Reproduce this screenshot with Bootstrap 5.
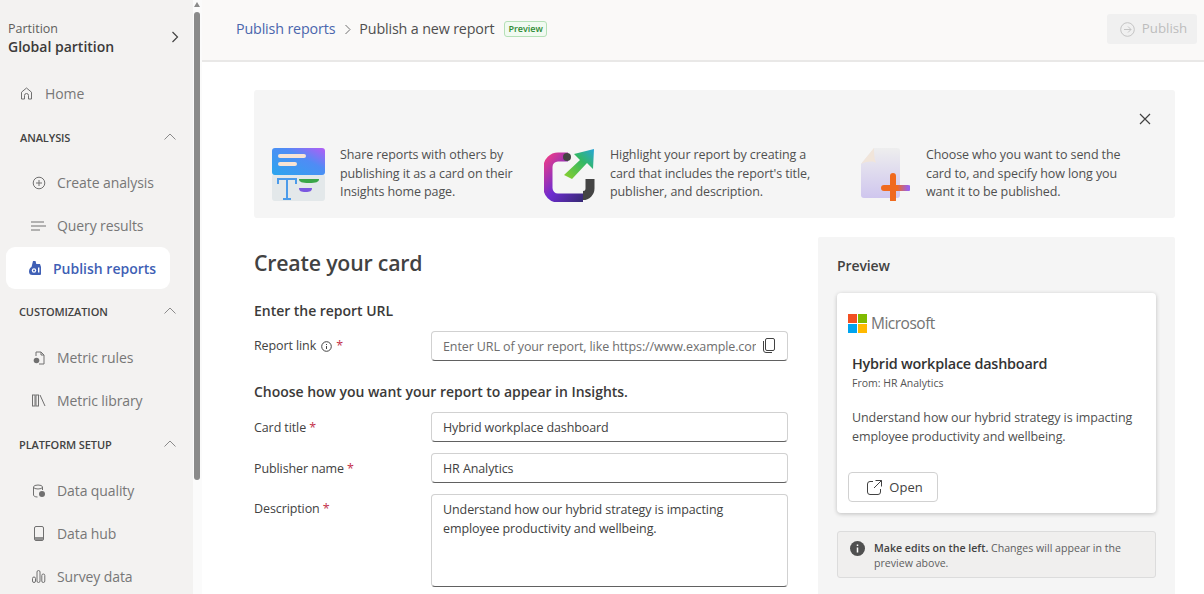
<!DOCTYPE html>
<html lang="en"><head><meta charset="utf-8"><title>Publish a new report</title>
<link href="https://cdn.jsdelivr.net/npm/bootstrap@5.3.0/dist/css/bootstrap.min.css" rel="stylesheet">
<style>
html,body{height:594px;overflow:hidden}
body{font-family:"Open Sans","Noto Sans",sans-serif;color:#424242;background:#fff;font-size:13px}
.shell{height:594px}
.sidenav{width:193px;background:#f3f2f1;flex:none;overflow:hidden}
.partition{height:71px;padding:20px 14px 0 8px}
.part-chev{margin-top:11px}
.part-lbl{font-size:12.5px;line-height:17px;color:#605e5c}
.part-name{font-size:14px;line-height:20px;font-weight:600;color:#3b3a39}
.nav-line{height:43px;color:#777;font-size:14px;letter-spacing:-.1px}
.nav-home{padding-left:20px;height:44px;gap:12px}
.nav-sub{padding-left:31px}
.nav-home svg{flex:none}
.icon-cell{width:15px;margin-right:11px;flex:none;display:flex;justify-content:center}
.sect{height:46px;padding:0 17px 0 19px;font-size:11px;font-weight:600;color:#424242;letter-spacing:-.1px}
.sect-a{padding-left:20px}
.sect-cust{height:47px}
.sect-last{height:47px}
.nav-on{height:42px;margin:0 23px 0 6px;padding-left:23px;gap:11px;background:#fff;border-radius:9px;color:#3f5fb5;font-weight:600;font-size:14px}
.track{width:9px;flex:none;background:#fbfbfb}
.thumb{width:6px;height:468px;margin:5px 0 0 1px;background:#8a8a8a;border-radius:3px}
.arrowup{width:0;height:0;margin:2px 0 0 1px;border:3.5px solid transparent;border-top:0;border-bottom:5px solid #8a8a8a}
.topbar{height:62px;flex:none;background:#faf9f8;border-bottom:2px solid #e9e8e7;padding:0 7px 2px 34px}
.crumb-a{color:#4a66ad;font-size:14.3px;letter-spacing:-.15px}
.crumb-b{color:#4f4f4f;font-size:14.3px;letter-spacing:-.15px}
.crumb-sep{margin:0 7px 0 9px}
.tag-prev{border:1px solid #b5e0b7;background:#f1faf1;color:#2f8a35;font-size:9px;line-height:12px;border-radius:3px;padding:1px 3px;font-weight:600;margin-left:10px}
.pub-btn{width:90px;height:30px;background:#f0f0f0;border:0;border-radius:3px;color:#bdbdbd;font-size:13.3px;gap:7px;padding-left:9px}
.work{padding:28px 29px 0 52px}
.banner{height:128px;background:#f5f5f5;border-radius:3px;padding:0 0 0 18px}
.banner-x{top:23px;right:24px}
.ban-txt{font-size:12.5px;line-height:18.5px;color:#505050;letter-spacing:-.1px}
.ban-cell{margin-top:56px;gap:15px}
.ban-1{width:272px}
.ban-2{width:316px;gap:13px}
.ban-2 .ban-txt{max-width:205px}
.ban-3{width:280px;gap:16px}
.ban-art{flex:none;margin-top:2px}
.formcol{width:534px;flex:none;padding-top:30px}
.h-card{font-size:21.3px;line-height:30px;font-weight:600;color:#424242;letter-spacing:-.2px;margin:0 0 23px}
.h-sec{font-size:14px;line-height:20px;font-weight:600;color:#3b3a39;letter-spacing:-.03px;margin:0}
.h-url{margin-bottom:10px}
.h-choose{margin-bottom:10px}
.frow{display:flex}
.row-link{margin-bottom:21px}
.row-gap{margin-bottom:11px}
.flbl{width:177px;flex:none;font-size:12.5px;color:#424242;letter-spacing:-.1px;padding-top:2px}
.flbl-link{padding-top:6px}
.flbl-top{padding-top:6px}
.info-i{margin-left:1px}
.req{color:#c4314b}
.fbox.form-control{height:30px;font-size:12.5px;padding:0 11px;border:1px solid #d1d1d1;border-bottom:1px solid #616161;border-radius:4px;color:#424242;letter-spacing:-.1px;box-shadow:none;background:#fff}
.fbox.form-control::placeholder{color:#6e6e6e;opacity:1}
.fbox-url.form-control{padding-right:31px}
.copy-i{top:7px;right:13px}
textarea.fbox.form-control{height:93px;line-height:19px;padding:5px 11px;resize:none}
.prevcol{width:357px;flex:none;background:#f5f5f5;margin:19px 0 0 30px;padding:19px 19px 0;height:400px;border-radius:2px}
.prev-h{font-size:14px;line-height:20px;font-weight:600;color:#424242;letter-spacing:-.1px;margin-bottom:17px}
.pcard{height:220px;background:#fff;border-radius:4px;box-shadow:0 1px 4px rgba(0,0,0,.22);padding:19px 11px 0}
.ms-logo{flex:none}
.ms-word{font-size:15.5px;color:#737373;letter-spacing:-.5px;font-weight:500}
.pc-title{font-size:14.4px;line-height:20px;font-weight:600;color:#333;letter-spacing:-.2px;margin:19px 0 0 4px}
.pc-from{font-size:10.5px;line-height:18px;color:#555;margin-left:4px}
.pc-desc{font-size:12.5px;line-height:19px;color:#505050;margin:16px 0 0 4px;letter-spacing:-.1px}
.open-btn{width:90px;height:30px;margin-top:26px;border:1px solid #d1d1d1;border-radius:4px;background:#fff;color:#424242;font-size:13px;gap:7px;padding:0 0 0 4px}
.hintbox{height:47px;margin-top:18px;background:#f0efee;border:1px solid #dcdcdc;border-radius:3px;padding:9px 12px 0;gap:9px;font-size:10.6px;line-height:15px;color:#5e5e5e}
.hintbox b{font-weight:600;color:#424242}
.hint-i{flex:none;margin-top:0}
</style></head><body>
<div class="shell d-flex">
 <nav class="sidenav">
  <div class="partition d-flex justify-content-between align-items-start">
   <div><div class="part-lbl">Partition</div><div class="part-name">Global partition</div></div>
   <svg class="part-chev" width="8" height="12" viewBox="0 0 8 12" fill="none" stroke="#424242" stroke-width="1.2"><path d="M1.500 1l5 5-5 5"/></svg>
  </div>
  <div class="nav-line nav-home d-flex align-items-center"><svg width="13" height="13" viewBox="0 0 13 13" fill="none" stroke="#707070"><path d="M1.500 12V5.200L6.500 1l5 4.200V12H8.500V8.500a2 2 0 0 0-4 0V12z"/></svg>Home</div>
  <div class="sect sect-a d-flex align-items-center justify-content-between"><span>ANALYSIS</span><svg class="mb-1" width="12" height="7" viewBox="0 0 12 7" fill="none" stroke="#8a8a8a"><path d="M.5 6.500 6 1l5.500 5.500"/></svg></div>
  <div class="nav-line nav-sub d-flex align-items-center"><span class="icon-cell"><svg width="14" height="14" viewBox="0 0 14 14" fill="none" stroke="#707070"><circle cx="7" cy="7" r="5.800"/><path d="M7 4v6M4 7h6"/></svg></span>Create analysis</div>
  <div class="nav-line nav-sub d-flex align-items-center"><span class="icon-cell"><svg width="15" height="12" viewBox="0 0 15 12" fill="none" stroke="#707070"><path d="M0 2h13M0 6h15M0 10h9"/></svg></span>Query results</div>
  <div class="nav-on d-flex align-items-center"><svg width="13" height="14" viewBox="0 0 13 14" fill="#3f5fb5"><path d="M4 0h2.500l.8 3H11l1 3v7a1 1 0 0 1-1 1H3.500A3.500 3.500 0 0 1 0 10.500C0 8 1.500 6.500 2.500 6z"/><circle cx="5" cy="9.500" r="2.200" fill="#fff"/><circle cx="5" cy="9.500" r="1" fill="#3f5fb5"/><rect x="9" y="6.500" width="1.400" height="5" fill="#fff"/></svg>Publish reports</div>
  <div class="sect sect-cust d-flex align-items-center justify-content-between"><span>CUSTOMIZATION</span><svg class="mb-1" width="12" height="7" viewBox="0 0 12 7" fill="none" stroke="#8a8a8a"><path d="M.5 6.500 6 1l5.500 5.500"/></svg></div>
  <div class="nav-line nav-sub d-flex align-items-center"><span class="icon-cell"><svg width="14" height="14" viewBox="0 0 14 14" fill="none" stroke="#707070"><path d="M4 5V1h5l3 3v9H7"/><path d="M9 1v3h3"/><circle cx="4.500" cy="9.500" r="2.800" fill="#707070" stroke="none"/></svg></span>Metric rules</div>
  <div class="nav-line nav-sub d-flex align-items-center"><span class="icon-cell"><svg width="14" height="13" viewBox="0 0 14 13" fill="none" stroke="#707070"><rect x=".5" y="1" width="2.500" height="11"/><rect x="4" y="1" width="2.500" height="11"/><path d="M8 1l5 11"/></svg></span>Metric library</div>
  <div class="sect sect-last d-flex align-items-center justify-content-between"><span>PLATFORM SETUP</span><svg class="mb-1" width="12" height="7" viewBox="0 0 12 7" fill="none" stroke="#8a8a8a"><path d="M.5 6.500 6 1l5.500 5.500"/></svg></div>
  <div class="nav-line nav-sub d-flex align-items-center"><span class="icon-cell"><svg width="14" height="14" viewBox="0 0 14 14" fill="none" stroke="#707070"><ellipse cx="6" cy="3" rx="4.500" ry="2"/><path d="M1.500 3v8c0 1 1.500 2 4 2M10.500 3v3"/><circle cx="10" cy="10" r="3" fill="#707070" stroke="none"/></svg></span>Data quality</div>
  <div class="nav-line nav-sub d-flex align-items-center"><span class="icon-cell"><svg width="14" height="15" viewBox="0 0 14 15" fill="none" stroke="#707070"><rect x="2.500" y=".5" width="9" height="14" rx="1.500"/><path d="M3 11h8v3H3z" fill="#909090" stroke="none"/></svg></span>Data hub</div>
  <div class="nav-line nav-sub d-flex align-items-center"><span class="icon-cell"><svg width="14" height="13" viewBox="0 0 14 13" fill="none" stroke="#707070"><rect x=".5" y="7" width="3" height="5.500" rx="1.500"/><rect x="5" y=".5" width="3" height="12" rx="1.500"/><rect x="9.800" y="4" width="3" height="8.500" rx="1.500"/></svg></span>Survey data</div>
 </nav>
 <div class="track"><div class="arrowup"></div><div class="thumb"></div></div>
 <div class="flex-grow-1 d-flex flex-column overflow-hidden">
  <header class="topbar d-flex align-items-center">
   <span class="crumb-a">Publish reports</span>
   <svg class="crumb-sep" width="8" height="11" viewBox="0 0 8 11" fill="none" stroke="#707070"><path d="M1.500 1l4.500 4.500L1.500 10"/></svg>
   <span class="crumb-b">Publish a new report</span>
   <span class="tag-prev">Preview</span>
   <button class="pub-btn ms-auto d-flex align-items-center justify-content-center" type="button" disabled><svg width="15" height="15" viewBox="0 0 15 15" fill="none" stroke="#c4c4c4"><circle cx="7.500" cy="7.500" r="6.800"/><path d="M4 7.500h7M8 4.500l3 3-3 3"/></svg>Publish</button>
  </header>
  <main class="work">
   <section class="banner position-relative d-flex">
    <svg class="banner-x position-absolute" width="12" height="12" viewBox="0 0 12 12" stroke="#424242" stroke-width="1.200"><path d="M1 1l10 10M11 1L1 11"/></svg>
    <div class="ban-cell ban-1 d-flex">
     <svg class="ban-art" width="53" height="53" viewBox="0 0 53 53"><defs><linearGradient id="g1" x1="0" y1="1" x2="1" y2="0"><stop offset="0" stop-color="#2aa6ee"/><stop offset=".6" stop-color="#4f8cf5"/><stop offset="1" stop-color="#b45cf5"/></linearGradient></defs><rect y="26" width="53" height="27" rx="3" fill="#e3e8ea"/><rect width="53" height="27" rx="3" fill="url(#g1)"/><rect x="6" y="6" width="28" height="4" rx="2" fill="#f7e3d4"/><rect x="6" y="14" width="19" height="4" rx="2" fill="#f7e3d4"/><path d="M6 36v-5h18v5M15 31v20M11 51h8" stroke="#4b9bea" stroke-width="2" fill="none"/><path d="M27 31h20c0 3-3 4-10 4s-10-1-10-4z" fill="#3aa648"/><path d="M27 40h13c0 3-2 4-6.500 4S27 43 27 40z" fill="#7a57e0"/></svg>
     <div class="ban-txt">Share reports with others by publishing it as a card on their Insights home page.</div>
    </div>
    <div class="ban-cell ban-2 d-flex">
     <svg class="ban-art" width="53" height="54" viewBox="0 0 53 54"><defs><linearGradient id="g2" x1="0" y1="0" x2="1" y2="1"><stop offset="0" stop-color="#e33b8e"/><stop offset=".5" stop-color="#6d2bd0"/><stop offset="1" stop-color="#3a2a7a"/></linearGradient><linearGradient id="g3" x1="0" y1="1" x2="1" y2="0"><stop offset="0" stop-color="#8fd12a"/><stop offset=".6" stop-color="#34b864"/><stop offset="1" stop-color="#27a5d8"/></linearGradient></defs><path d="M24 9H14A10 10 0 0 0 4 19v21a10 10 0 0 0 10 10h25" fill="none" stroke="url(#g2)" stroke-width="9"/><path d="M39 47.500a7 7 0 0 0 7-7V31" fill="none" stroke="#444" stroke-width="9"/><path d="M20 27 36 12l-6-6 20-5-1 20-6-6-15 16z" fill="url(#g3)"/><circle cx="23" cy="9" r="4" fill="#444"/></svg>
     <div class="ban-txt">Highlight your report by creating a card that includes the report's title, publisher, and description.</div>
    </div>
    <div class="ban-cell ban-3 d-flex">
     <svg class="ban-art" width="50" height="53" viewBox="0 0 50 53"><defs><linearGradient id="g4" x1="0" y1="0" x2="0" y2="1"><stop offset="0" stop-color="#eeeeee"/><stop offset="1" stop-color="#cfc6ee"/></linearGradient><linearGradient id="g5" x1="0" y1="0" x2="1" y2="0"><stop offset=".55" stop-color="#f06a1e"/><stop offset="1" stop-color="#9a62ea"/></linearGradient></defs><path d="M14 0h23a3 3 0 0 1 3 3v44a3 3 0 0 1-3 3H4a3 3 0 0 1-3-3V16z" fill="url(#g4)"/><path d="M14 0 1 16c7-3 12-3 15-1-2-5-2-10-2-15z" fill="#f1e5da"/><path d="M33 28v24M24 40h24" stroke="url(#g5)" stroke-width="6" stroke-linecap="round"/></svg>
     <div class="ban-txt">Choose who you want to send the card to, and specify how long you want it to be published.</div>
    </div>
   </section>
   <div class="d-flex">
    <form class="formcol">
     <h2 class="h-card">Create your card</h2>
     <h3 class="h-sec h-url">Enter the report URL</h3>
     <div class="frow align-items-start row-link"><div class="flbl flbl-link d-flex align-items-center gap-1">Report link <svg class="info-i" width="11" height="11" viewBox="0 0 11 11" fill="none" stroke="#424242"><circle cx="5.500" cy="5.500" r="4.800"/><path d="M5.500 5v3M5.500 3v1"/></svg> <span class="req">*</span></div>
      <div class="position-relative flex-grow-1"><input class="form-control fbox fbox-url" placeholder="Enter URL of your report, like https://www.example.com"><svg class="copy-i position-absolute" width="12" height="15" viewBox="0 0 12 15" fill="none" stroke="#424242"><rect x="2.500" y=".5" width="9" height="12" rx="1.500"/><path d="M.5 3v9a2.500 2.500 0 0 0 2.500 2.500h6"/></svg></div></div>
     <h3 class="h-sec h-choose">Choose how you want your report to appear in Insights.</h3>
     <div class="frow align-items-center row-gap"><div class="flbl">Card title <span class="req">*</span></div><input class="form-control fbox" value="Hybrid workplace dashboard"></div>
     <div class="frow align-items-center row-gap"><div class="flbl">Publisher name <span class="req">*</span></div><input class="form-control fbox" value="HR Analytics"></div>
     <div class="frow"><div class="flbl flbl-top">Description <span class="req">*</span></div><textarea class="form-control fbox">Understand how our hybrid strategy is impacting employee productivity and wellbeing.</textarea></div>
    </form>
    <aside class="prevcol">
     <div class="prev-h">Preview</div>
     <div class="pcard">
      <div class="d-flex align-items-center gap-1"><svg class="ms-logo" width="19" height="19" viewBox="0 0 19 19"><rect width="9" height="9" fill="#f25022"/><rect x="10" width="9" height="9" fill="#7fba00"/><rect y="10" width="9" height="9" fill="#00a4ef"/><rect x="10" y="10" width="9" height="9" fill="#ffb900"/></svg><span class="ms-word">Microsoft</span></div>
      <div class="pc-title">Hybrid workplace dashboard</div>
      <div class="pc-from">From: HR Analytics</div>
      <div class="pc-desc">Understand how our hybrid strategy is impacting employee productivity and wellbeing.</div>
      <button class="open-btn d-flex align-items-center justify-content-center" type="button"><svg width="15" height="15" viewBox="0 0 15 15" fill="none" stroke="#424242"><path d="M6 1.500H3A2.500 2.500 0 0 0 .5 4v8A2.500 2.500 0 0 0 3 14.500h8a2.500 2.500 0 0 0 2.500-2.500V9M8.500.5h6v6M14.500.5 7 8"/></svg>Open</button>
     </div>
     <div class="hintbox d-flex"><svg class="hint-i" width="15" height="15" viewBox="0 0 15 15"><circle cx="7.500" cy="7.500" r="7.500" fill="#505050"/><path d="M7.500 6.500v5M7.500 3.500v1.500" stroke="#fff" stroke-width="1.500"/></svg><div><b>Make edits on the left.</b> Changes will appear in the preview above.</div></div>
    </aside>
   </div>
  </main>
 </div>
</div>
<script src="https://cdn.jsdelivr.net/npm/bootstrap@5.3.0/dist/js/bootstrap.bundle.min.js"></script>
</body></html>
